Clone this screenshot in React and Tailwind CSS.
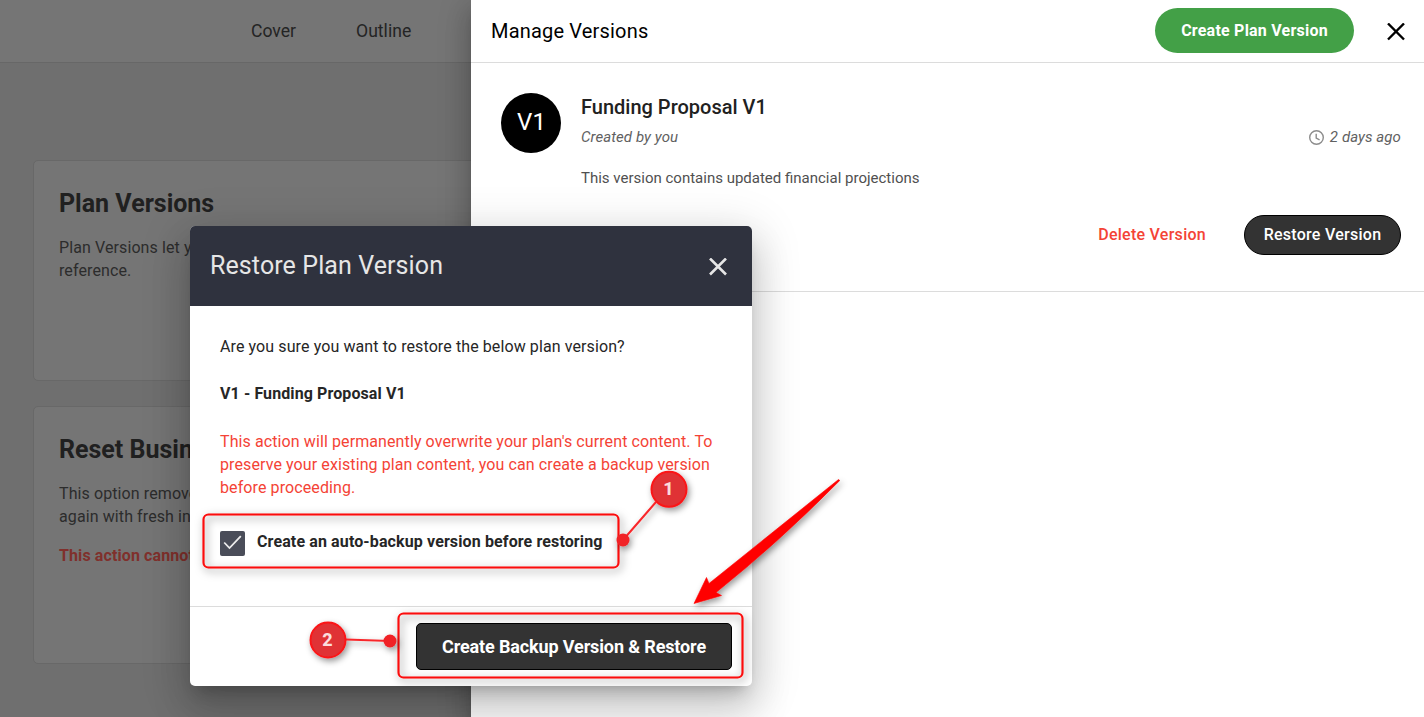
const CARD = 'w-[600px] rounded-[5px] border border-[#686868] bg-[#757575] px-[25px] text-[16px] leading-[23px] tracking-[0.1px] text-[#2c2c2c]'
const CARD_TITLE = 'text-[25px] leading-[32px] font-bold tracking-normal text-[#202020]'

function CloseIcon({ className, size = 18, stroke = 2.4 }) {
  return (
    <svg className={className} width={size} height={size} viewBox="0 0 18 18" fill="none" stroke="currentColor" strokeWidth={stroke}>
      <path d="M1 .5l16 16M17 .5L1 16.5" />
    </svg>
  )
}

function Page() {
  return (
    <div className="w-[471px] shrink-0 overflow-hidden bg-[#6f6f6f]">
      <header className="flex h-[63px] items-center gap-[60px] border-b border-[#676767] bg-[#757575] pt-px pl-[251px] text-[17.6px] text-[#242424]">
        <span>Cover</span>
        <span>Outline</span>
      </header>
      <main className="flex flex-col gap-[25px] pt-[97px] pl-[33px]">
        <section className={`${CARD} h-[221px] pt-[27px]`}>
          <h2 className={CARD_TITLE}>Plan Versions</h2>
          <p className="mt-4">Plan Versions let you<br />reference.</p>
        </section>
        <section className={`${CARD} h-[258px] pt-[27px]`}>
          <h2 className={CARD_TITLE}>Reset Business</h2>
          <p className="mt-4">This option removes<br />again with fresh in</p>
          <p className="mt-4 font-bold text-[#80302c]">This action cannot</p>
        </section>
      </main>
    </div>
  )
}

function VersionsDrawer() {
  return (
    <aside className="relative flex-1 bg-white shadow-[0_8px_10px_-5px_rgba(0,0,0,.2),0_16px_24px_2px_rgba(0,0,0,.14),0_6px_30px_5px_rgba(0,0,0,.12)]">
      <header className="flex h-[63px] items-center border-b border-[#dcdcdc] pr-[19px] pl-5">
        <h1 className="flex-1 text-[20px] tracking-[0.18px] text-black">Manage Versions</h1>
        <button className="mr-[33px] mb-px h-[45px] w-[199px] rounded-full bg-[#43a047] text-[16px] font-bold tracking-[0.22px] text-white">Create Plan Version</button>
        <CloseIcon className="mt-px text-black" />
      </header>
      <article className="flex h-[229px] border-b border-[#dcdcdc] pt-[30px] pr-[23px] pl-[30px]">
        <div className="flex size-[60px] shrink-0 items-center justify-center rounded-full bg-black pb-0.5 pl-px text-[24px] text-white">V1</div>
        <div className="ml-5 flex-1">
          <h2 className="text-[20px] leading-[28px] font-medium text-[#212121]">Funding Proposal V1</h2>
          <div className="mt-[5px] flex items-center justify-between text-[15px] leading-[22px] tracking-[0.08px] text-[#616161] italic">
            <span>Created by you</span>
            <span className="flex items-center gap-1.5">
              <svg width="15" height="15" viewBox="0 0 15 15" fill="none" stroke="#8c8c8c" strokeWidth="1.4" className="mt-px">
                <circle cx="7.5" cy="7.5" r="6.8" />
                <path d="M7.2 3.8V8l3.4 1.8" />
              </svg>
              2 days ago
            </span>
          </div>
          <p className="mt-[19px] text-[15px] leading-[22px] text-[#505050]">This version contains updated financial projections</p>
          <div className="mt-[26px] flex items-center justify-end gap-[38px] text-[16px] tracking-[0.27px]">
            <button className="font-medium text-[#f44336]">Delete Version</button>
            <button className="h-10 w-[157px] rounded-full border border-black bg-[#333] font-medium text-white">Restore Version</button>
          </div>
        </div>
      </article>
    </aside>
  )
}

function RestoreDialog() {
  return (
    <div role="dialog" className="absolute top-[226px] left-[190px] flex h-[460px] w-[562px] flex-col overflow-hidden rounded-[5px] bg-white shadow-[0_11px_15px_-7px_rgba(0,0,0,.2),0_24px_38px_3px_rgba(0,0,0,.14),0_9px_46px_8px_rgba(0,0,0,.12)]">
      <header className="flex h-20 items-center justify-between bg-[#2f323e] pr-[25.5px] pl-5 text-[#e6e6e6]">
        <h2 className="text-[25px] tracking-[0.1px]">Restore Plan Version</h2>
        <CloseIcon className="mt-0.5" stroke={2.6} />
      </header>
      <div className="flex-1 px-[30px] pt-[29px] text-[16px] leading-[23px] tracking-[0.1px] text-[#262626]">
        <p>Are you sure you want to restore the below plan version?</p>
        <p className="mt-6 font-bold">V1 - Funding Proposal V1</p>
        <p className="mt-[25px] text-[#f44336]">
          This action will permanently overwrite your plan's current content. To<br />
          preserve your existing plan content, you can create a backup version<br />
          before proceeding.
        </p>
        <label className="mt-[31px] flex items-center gap-3 font-bold tracking-[0.12px]">
          <span className="flex size-[25px] items-center justify-center rounded-[2px] bg-[#4a4d59]">
            <svg width="19" height="15" viewBox="0 0 19 15" fill="none" stroke="#ececec" strokeWidth="1.8" className="mb-px">
              <path d="M1.2 7.5l5.3 5.5L17.8 1.2" />
            </svg>
          </span>
          <span className="pb-[3px]">Create an auto-backup version before restoring</span>
        </label>
      </div>
      <footer className="flex h-20 items-center justify-end border-t border-[#dcdcdc] pr-5">
        <button className="h-[47px] w-[316px] rounded-[5px] border border-black bg-[#333] text-[18px] font-bold tracking-[-0.13px] text-white">Create Backup Version &amp; Restore</button>
      </footer>
    </div>
  )
}

// callouts drawn on top of the dialog
function Annotations() {
  return (
    <svg className="pointer-events-none absolute inset-0" width="1424" height="717" viewBox="0 0 1424 717">
      <defs>
        <filter id="shadow" filterUnits="userSpaceOnUse" x="0" y="0" width="1424" height="717">
          <feDropShadow dx="2" dy="3" stdDeviation="3" floodOpacity=".4" />
        </filter>
        <filter id="soft" filterUnits="userSpaceOnUse" x="0" y="0" width="1424" height="717">
          <feDropShadow dx="2" dy="3" stdDeviation="4" floodOpacity=".5" />
        </filter>
      </defs>
      <g fill="none" stroke="#fb0d0d" strokeWidth="2.2" filter="url(#soft)">
        <rect x="203.5" y="514.5" width="415" height="53" rx="5" />
        <rect x="398.5" y="613.5" width="344" height="64" rx="5" />
      </g>
      <g filter="url(#shadow)">
        <path d="M656 502L623 540M346 639.5L390 641" stroke="#f8282b" strokeWidth="2" />
        <circle cx="623" cy="540" r="6.5" fill="#f02026" />
        <circle cx="390" cy="641" r="6.5" fill="#f02026" />
        <circle cx="669" cy="489.3" r="17.5" fill="#e03335" stroke="#fb1419" strokeWidth="2" />
        <circle cx="328" cy="640" r="17.5" fill="#e03335" stroke="#fb1419" strokeWidth="2" />
      </g>
      <g fill="#fbdcdc" fontSize="18" fontWeight="800" textAnchor="middle" className="font-[Roboto,sans-serif]">
        <text x="668.5" y="495">1</text>
        <text x="327.5" y="646">2</text>
      </g>
      <path d="M838.5 479.5L709 583.5L706.5 577.5L694 603.5L721.5 595.5L716 592.5Q778 543 839.8 480.5Z" fill="#f00" stroke="#f00" strokeWidth=".6" filter="url(#shadow)" />
    </svg>
  )
}

export default function App() {
  return (
    <div className="relative flex h-[717px] w-[1424px] overflow-hidden font-[Roboto,sans-serif]">
      <Page />
      <VersionsDrawer />
      <RestoreDialog />
      <Annotations />
    </div>
  )
}
